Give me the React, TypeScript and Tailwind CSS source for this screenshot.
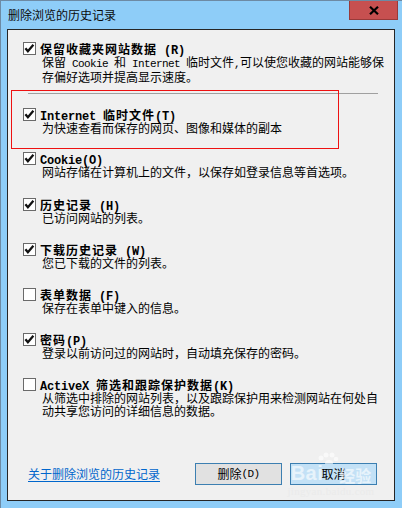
import React from "react";

const Check = ({ checked }: { checked: boolean }) => (
  <div className="w-[13px] h-[13px] shrink-0 border border-[#6a6a6a] bg-white flex items-center justify-center">
    {checked && (
      <svg width="11" height="11" viewBox="0 0 11 11">
        <polyline points="1.4,5.2 3.9,8.2 9.4,1.8" fill="none" stroke="#111" strokeWidth="2.3" strokeLinejoin="miter" />
      </svg>
    )}
  </div>
);

const M = ({ children, bold }: { children: React.ReactNode; bold?: boolean }) =>
  bold ? (
    <span className="font-['Liberation_Mono',monospace] text-[12px] leading-none tracking-[-0.2px] font-bold whitespace-pre">{children}</span>
  ) : (
    <span className="font-['Liberation_Mono',monospace] text-[11px] leading-none tracking-[-0.6px] whitespace-pre">{children}</span>
  );

const Item = ({
  checked,
  title,
  desc,
  className,
}: {
  checked: boolean;
  title: React.ReactNode;
  desc: React.ReactNode;
  className?: string;
}) => (
  <div className={"flex flex-col " + (className ?? "")}>
    <div className="flex items-start h-[13px]">
      <Check checked={checked} />
      <span className="ml-[4px] font-bold text-[12px] leading-[13px] tracking-[1px] whitespace-nowrap">{title}</span>
    </div>
    <div className="pl-[19px] text-[12px] leading-[13px] whitespace-nowrap">{desc}</div>
  </div>
);

export default function App() {
  return (
    <div className="w-[402px] h-[508px] bg-[#8ecdf8] border-t border-l border-[#6d8aa4] flex flex-col overflow-hidden relative text-black font-['Noto_Sans_CJK_SC',sans-serif]">
      {/* title bar */}
      <div className="h-[28px] flex items-start justify-between shrink-0">
        <div className="pl-[7px] pt-[7px] text-[12px] leading-[14px] text-[#0b0b0b]">删除浏览的历史记录</div>
        <div className="mr-[4px] w-[49px] h-[19px] bg-[#c75050] border border-t-0 border-[#983a3a] flex items-center justify-center">
          <svg width="10" height="9" viewBox="0 0 10 9">
            <path d="M1 0.8 L9 8.2 M9 0.8 L1 8.2" stroke="#000" strokeWidth="2.2" />
          </svg>
        </div>
      </div>

      {/* client area */}
      <div className="ml-[6px] w-[388px] h-[472px] shrink-0 border border-[#262626] bg-[#f0f0f0] flex flex-col pl-[15px] pt-[12px]">
        <Item
          checked
          title={
            <>
              保留收藏夹网站数据<M bold> (R)</M>
            </>
          }
          desc={
            <>
              保留<M> Cookie </M>和<M> Internet </M>临时文件<M>,</M>可以使您收藏的网站能够保
              <br />
              存偏好选项并提高显示速度。
            </>
          }
        />
        <div className="mt-[10px] ml-[5px] w-[350px] h-px bg-[#a0a0a0] shrink-0" />
        <Item
          className="mt-[14px]"
          checked
          title={
            <>
              <M bold>Internet </M>临时文件<M bold>(T)</M>
            </>
          }
          desc="为快速查看而保存的网页、图像和媒体的副本"
        />
        <Item
          className="mt-[18px]"
          checked
          title={<M bold>Cookie(O)</M>}
          desc="网站存储在计算机上的文件，以保存如登录信息等首选项。"
        />
        <Item
          className="mt-[20px]"
          checked
          title={
            <>
              历史记录<M bold> (H)</M>
            </>
          }
          desc="已访问网站的列表。"
        />
        <Item
          className="mt-[19px]"
          checked
          title={
            <>
              下载历史记录<M bold> (W)</M>
            </>
          }
          desc="您已下载的文件的列表。"
        />
        <Item
          className="mt-[19px]"
          checked={false}
          title={
            <>
              表单数据<M bold> (F)</M>
            </>
          }
          desc="保存在表单中键入的信息。"
        />
        <Item
          className="mt-[19px]"
          checked
          title={
            <>
              密码<M bold>(P)</M>
            </>
          }
          desc="登录以前访问过的网站时，自动填充保存的密码。"
        />
        <Item
          className="mt-[19px]"
          checked={false}
          title={
            <>
              <M bold>ActiveX </M>筛选和跟踪保护数据<M bold>(K)</M>
            </>
          }
          desc={
            <>
              从筛选中排除的网站列表，以及跟踪保护用来检测网站在何处自
              <br />
              动共享您访问的详细信息的数据。
            </>
          }
        />

        {/* bottom row */}
        <div className="mt-auto mb-[15px] pr-[17px] flex items-center h-[22px]">
          <span className="ml-[5px] text-[12px] leading-[14px] text-[#0066cc] underline underline-offset-2">关于删除浏览的历史记录</span>
          <button className="ml-auto w-[87px] h-[22px] bg-[#e1e1e1] border border-[#3c7fb1] text-[12px] leading-[14px] flex items-center justify-center">
            删除<M>(D)</M>
          </button>
          <button className="ml-[8px] w-[87px] h-[22px] bg-[#c3e1f6] border border-[#3c7fb1] text-[12px] leading-[14px] flex items-center justify-center">
            取消
          </button>
        </div>
      </div>

      {/* red annotation box */}
      <div className="absolute left-[10px] top-[89px] w-[328px] h-[59px] border border-[#ee1111] pointer-events-none" />

      {/* baidu watermark */}
      <div className="absolute left-[284px] top-[451px] w-[92px] h-[48px] pointer-events-none opacity-60 flex flex-col items-center">
        <svg width="22" height="12" viewBox="0 0 22 12" className="ml-[-6px]">
          <circle cx="4" cy="6" r="2.5" fill="#fff" />
          <circle cx="9" cy="3" r="2.5" fill="#fff" />
          <circle cx="15" cy="3" r="2.5" fill="#fff" />
          <circle cx="19" cy="7" r="2.3" fill="#fff" />
          <ellipse cx="12" cy="11" rx="4" ry="3" fill="#fff" />
        </svg>
        <div className="flex items-end leading-none mt-[-1px]">
          <span className="font-['Liberation_Sans',sans-serif] font-bold text-[20px] text-white tracking-[0.5px]">Bai</span>
          <span className="ml-[16px] text-[16px] text-white font-bold">经验</span>
        </div>
        <span className="mt-[3px] font-['Liberation_Serif',serif] text-[11px] leading-none text-[#e8e8e8] tracking-[0.3px]">jingyan.baidu.com</span>
      </div>
    </div>
  );
}
